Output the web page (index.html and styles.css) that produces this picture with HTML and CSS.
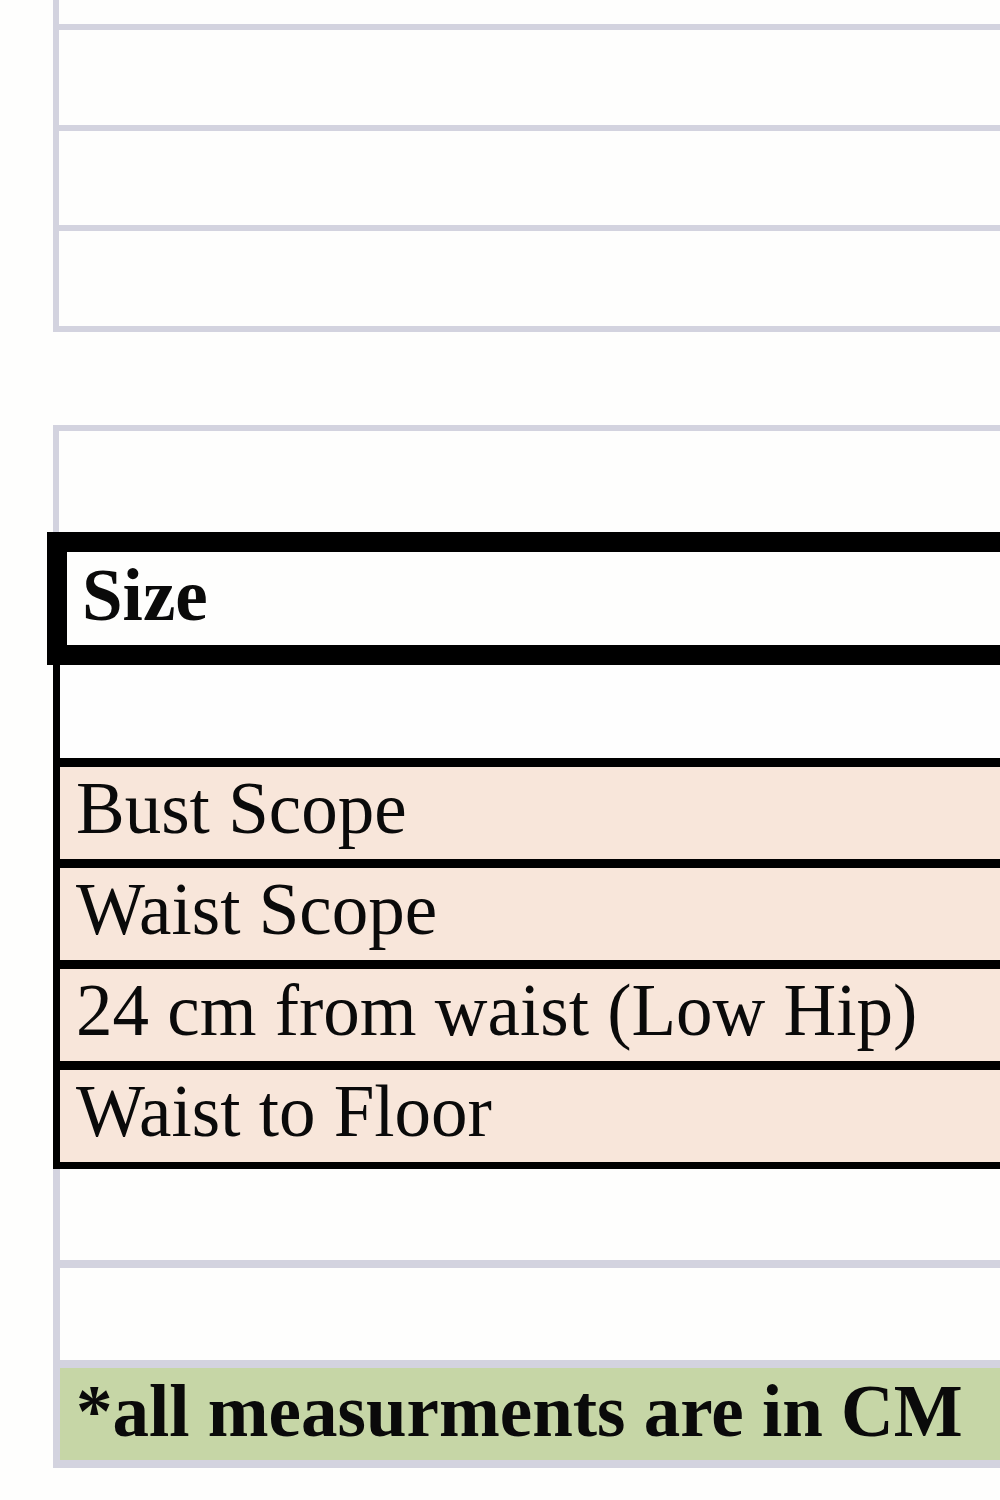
FILE: index.html
```html
<!DOCTYPE html>
<html>
<head>
<meta charset="utf-8">
<link rel="stylesheet" href="styles.css">
</head>
<body>
<div class="page">
  <div class="sheet sheet-top">
    <div class="cell first"></div>
    <div class="cell h95"></div>
    <div class="cell h94"></div>
    <div class="cell h95"></div>
  </div>
  <div class="gap"></div>
  <div class="sheet sheet-bottom">
    <div class="cell open"></div>
    <div class="size-box">Size</div>
    <div class="measures">
      <div class="mrow blank"></div>
      <div class="mrow peach">Bust Scope</div>
      <div class="mrow peach">Waist Scope</div>
      <div class="mrow peach">24 cm from waist (Low Hip)</div>
      <div class="mrow peach last">Waist to Floor</div>
    </div>
    <div class="cell lower h91"></div>
    <div class="cell lower h92"></div>
    <div class="cell lower note">*all measurments are in CM</div>
  </div>
</div>
</body>
</html>
```

FILE: styles.css
```css
html, body {
  margin: 0;
  padding: 0;
  background: #fefefd;
  overflow: hidden;
}

.page {
  width: 1000px;
  height: 1500px;
  overflow: hidden;
  font-family: "Liberation Serif", "Times New Roman", serif;
  color: #0a0a0a;
}

.sheet {
  margin-left: 53px;
  width: 1200px;
  display: flex;
  flex-direction: column;
}

.sheet-top {
  border-left: 6px solid #d3d3df;
}

.cell {
  border-bottom: 6px solid #d3d3df;
  box-sizing: content-box;
}

.first { height: 24px; }
.h95 { height: 95px; }
.h94 { height: 94px; }
.h91 { height: 91px; }
.h92 { height: 92px; }

.gap {
  height: 93px;
}

.sheet-bottom {
  border-top: 6px solid #d3d3df;
}

.open {
  height: 101px;
  border-left: 6px solid #d3d3df;
  border-bottom: none;
}

.size-box {
  margin-left: -6px;
  border: 20px solid #000;
  height: 91px;
  line-height: 84px;
  padding-top: 2px;
  padding-left: 15px;
  font-size: 73px;
  font-weight: bold;
}

.measures {
  border-left: 7px solid #000;
  display: flex;
  flex-direction: column;
}

.mrow {
  height: 92px;
  border-bottom: 9px solid #000;
  font-size: 73px;
  line-height: 84px;
  padding-left: 16px;
  white-space: nowrap;
}

.mrow.blank {
  height: 93px;
  background: #fefefe;
}

.mrow.peach {
  background: #f8e6da;
}

.mrow.last {
  border-bottom-width: 7px;
}

.lower {
  border-left: 7px solid #d3d3df;
  border-bottom-width: 8px;
}

.note {
  height: 90px;
  padding-top: 2px;
  background: #c6d6a6;
  font-size: 73px;
  font-weight: bold;
  line-height: 84px;
  padding-left: 16px;
  white-space: nowrap;
}
```
